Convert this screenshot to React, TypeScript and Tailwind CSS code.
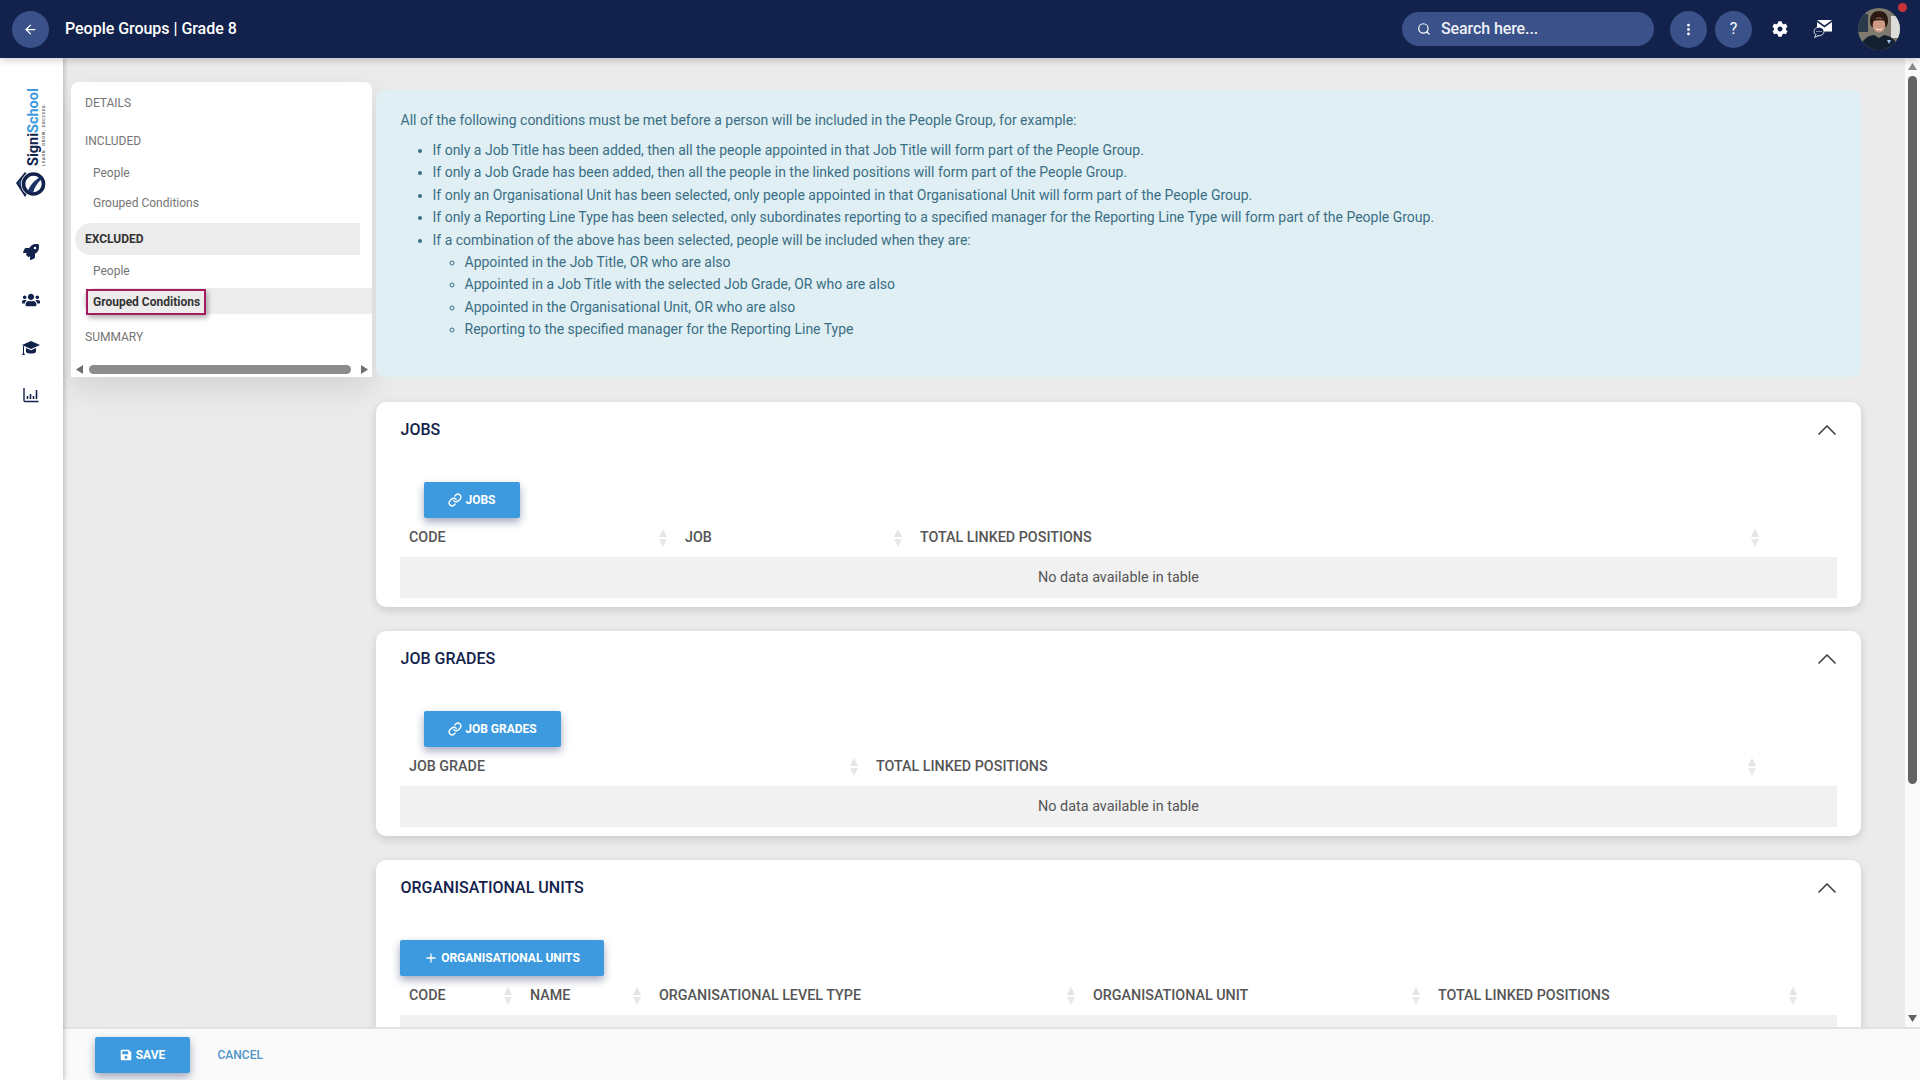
import { ArrowLeft, ChevronUp, EllipsisVertical, Link, Plus, Search } from 'lucide-react';
import { FaCog, FaRocket, FaSave, FaUsers } from 'react-icons/fa';

const SortIcon = () => (
  <svg width="8" height="18" viewBox="0 0 8 18" className="shrink-0">
    <path d="M4 0 8 8H0z" fill="#e4e4e4" />
    <path d="M0 10h8l-4 8z" fill="#e8e8e8" />
  </svg>
);

const Logo = () => (
  <div className="flex flex-col items-center pt-[31px]">
    <div className="ml-[9px] rotate-180 [writing-mode:vertical-rl] whitespace-nowrap h-[77px]">
      <div className="text-[14.5px] leading-[15px] font-bold">
        <span className="text-[#12224c]">Signi</span>
        <span className="text-[#3d9ade]">School</span>
      </div>
      <div className="text-[4px] leading-[5px] tracking-[0.8px] font-bold text-[#555]">LEARN. GROW. SUCCEED.</div>
    </div>
    <svg width="30" height="28" viewBox="0 0 30 28" className="mt-[4px] mr-[2px]">
      <path d="M0 13 9 2l3 3v17l-3 5z" fill="#12224c" />
      <path d="M2 13 9 6v15z" fill="#2c4a78" />
      <circle cx="17.500" cy="14" r="12.500" fill="#fff" />
      <circle cx="17.500" cy="14" r="10" fill="#fff" stroke="#12224c" strokeWidth="3.600" />
      <path d="M12 21c2-6 6-10 12-14l1.500 2c-4 4-7 8-8.500 14z" fill="#1b3566" />
    </svg>
  </div>
);

const Sidebar = () => (
  <aside className="relative z-10 w-[63px] shrink-0 bg-white shadow-[2px_0_4px_rgba(0,0,0,0.18)]">
    <Logo />
    <div className="mt-[46px] pr-[2px] flex flex-col items-center gap-[32px] text-[#12224c]">
      <div className="h-[16px] flex items-center"><FaRocket size={16} /></div>
      <div className="h-[16px] flex items-center"><FaUsers size={18} /></div>
      <div className="h-[16px] flex items-center">
        <svg width="18" height="14" viewBox="0 0 18 14" fill="#12224c">
          <path d="M9 0 18 4 9 8 0 4z" />
          <path d="M4 7 9 9.300 14 7v4c-1.500 2-8.500 2-10 0z" />
          <path d="M1 5h1v7l1 2H0l1-2z" />
        </svg>
      </div>
      <div className="h-[16px] -mt-[1px] flex items-center">
        <svg width="16" height="16" viewBox="0 0 16 16" fill="none" stroke="#12224c">
          <path d="M1 1v12.500q0 1 1 1h13.500" strokeWidth="1.400" />
          <path d="M4.500 9v3M7.500 7v5M10.500 9v3M13.500 3v9" strokeWidth="1.600" />
        </svg>
      </div>
    </div>
  </aside>
);

const Avatar = () => (
  <div className="relative">
    <svg width="42" height="42" viewBox="0 0 42 42" className="rounded-full">
      <rect width="42" height="42" fill="#7f7a6e" />
      <rect x="0" y="6" width="10" height="18" fill="#2b3b4c" />
      <rect x="33" y="8" width="9" height="22" fill="#dcdcd8" />
      <path d="M12 13c0-7 4-10 9-10s9 3 9 10c0 3-1 5-2 6H14c-1-1-2-3-2-6z" fill="#2a1a12" />
      <ellipse cx="21" cy="17" rx="6.300" ry="7.500" fill="#d09a84" />
      <path d="M14.500 13c2-3 9-4 13 0-3-1-9-1-13 0z" fill="#2a1a12" />
      <path d="M17.500 20q3.500 2.500 7 0l-1 2h-5z" fill="#f4ece8" />
      <path d="M2 42c1-10 7-14 14-15l5 3 5-3c7 1 13 5 14 15z" fill="#14202f" />
      <path d="M29 32h4l-2 4z" fill="#9fc9e8" />
    </svg>
    <span className="absolute top-[-5px] right-[-7px] w-[9px] h-[9px] rounded-full bg-[#c8333a]" />
  </div>
);

const Header = () => (
  <header className="relative z-20 h-[58px] shrink-0 bg-[#12224c] flex items-center justify-between shadow-[0_2px_8px_rgba(0,0,0,0.2)] pl-[12px] pr-[20px]">
    <div className="flex items-center gap-[16px]">
      <button className="w-[37px] h-[37px] rounded-full bg-[#3a5289] flex items-center justify-center text-white">
        <ArrowLeft size={15} />
      </button>
      <span className="text-white text-[16px] font-medium tracking-[-0.03px]">People Groups | Grade 8</span>
    </div>
    <div className="flex items-center">
      <div className="w-[252px] h-[34px] rounded-full bg-[#3a5289] flex items-center pl-[15px] gap-[10px] text-white">
        <Search size={14} />
        <span className="text-[16px] font-medium tracking-[-0.1px] text-[#eef1f7]">Search here...</span>
      </div>
      <button className="ml-[16px] w-[37px] h-[37px] rounded-full bg-[#3a5289] flex items-center justify-center text-white">
        <EllipsisVertical size={15} strokeWidth={2.500} />
      </button>
      <button className="ml-[8px] w-[37px] h-[37px] rounded-full bg-[#3a5289] flex items-center justify-center text-white text-[16px]">
        ?
      </button>
      <FaCog size={16} className="ml-[20px] text-white" />
      <svg width="20" height="18" viewBox="0 0 20 18" className="ml-[25px]">
        <path d="M4 0h15l-7.500 5.500z" fill="#fff" />
        <path d="M4 2l7.500 5.500L19 2v9.500H4z" fill="#fff" />
        <ellipse cx="6" cy="11.500" rx="5" ry="4.300" fill="#12224c" stroke="#fff" strokeWidth="0.800" />
        <path d="M2.800 15 1.500 17.500 5.500 15.800" fill="#12224c" stroke="#fff" strokeWidth="0.800" />
        <path d="M3.500 11.500h1M5.500 11.500h1M7.500 11.500h1" stroke="#fff" strokeWidth="0.900" />
      </svg>
      <div className="ml-[25px]">
        <Avatar />
      </div>
    </div>
  </header>
);

const SideNav = () => (
  <nav className="w-[301px] shrink-0 self-start bg-white rounded-t-[8px] text-[12px] text-[#757575] shadow-[0_12px_30px_rgba(0,0,0,0.1)]">
    <div className="h-[42px] flex items-center pl-[14px]">DETAILS</div>
    <div className="h-[34px] flex items-center pl-[14px]">INCLUDED</div>
    <div className="h-[30px] flex items-center pl-[22px]">People</div>
    <div className="h-[30px] flex items-center pl-[22px]">Grouped Conditions</div>
    <div className="mt-[5px] ml-[4px] w-[285px] h-[32px] flex items-center pl-[10px] bg-[#ececec] rounded-l-full rounded-r-[3px] font-bold text-[#333]">
      EXCLUDED
    </div>
    <div className="h-[31px] flex items-center pl-[22px]">People</div>
    <div className="mt-[2px] ml-[12px] h-[26px] bg-[#ececec] rounded-l-full flex items-center">
      <span className="ml-[3px] h-[26px] pl-[5px] pr-[4px] flex items-center translate-y-[1px] border-2 border-[#a61b5f] font-bold text-[#333] bg-[#ececec] shadow-[2px_3px_5px_rgba(0,0,0,0.3)]">
        Grouped Conditions
      </span>
    </div>
    <div className="h-[46px] flex items-center pl-[14px]">SUMMARY</div>
    <div className="h-[17px] flex items-center pl-[5px] pr-[4px] pt-[2px] gap-[5px] bg-white">
      <svg width="8" height="9" viewBox="0 0 8 9"><path d="M7 0v9L0 4.500z" fill="#707070" /></svg>
      <div className="flex-1 h-[9px] rounded-full bg-[#8c8c8c]" />
      <svg width="8" height="9" viewBox="0 0 8 9" className="ml-[4px]"><path d="M1 0v9l7-4.500z" fill="#707070" /></svg>
    </div>
  </nav>
);

const InfoBox = () => (
  <section className="mb-[1px] bg-[#e0eff4] rounded-[8px] pt-[18.6px] pb-[36.4px] pl-[24.5px] pr-[24px] text-[14px] leading-[22.4px] text-[#3a6e84] shadow-[0_0_6px_rgba(0,0,0,0.02)]">
    <p className="mb-[8px]">All of the following conditions must be met before a person will be included in the People Group, for example:</p>
    <ul className="list-disc pl-[32px]">
      <li>If only a Job Title has been added, then all the people appointed in that Job Title will form part of the People Group.</li>
      <li>If only a Job Grade has been added, then all the people in the linked positions will form part of the People Group.</li>
      <li>If only an Organisational Unit has been selected, only people appointed in that Organisational Unit will form part of the People Group.</li>
      <li>If only a Reporting Line Type has been selected, only subordinates reporting to a specified manager for the Reporting Line Type will form part of the People Group.</li>
      <li>
        If a combination of the above has been selected, people will be included when they are:
        <ul className="list-[circle] pl-[32px]">
          <li>Appointed in the Job Title, OR who are also</li>
          <li>Appointed in a Job Title with the selected Job Grade, OR who are also</li>
          <li>Appointed in the Organisational Unit, OR who are also</li>
          <li>Reporting to the specified manager for the Reporting Line Type</li>
        </ul>
      </li>
    </ul>
  </section>
);

type Column = { label: string; width: string };

const ActionButton = ({ label, plus, className }: { label: string; plus?: boolean; className: string }) => (
  <button className={`h-[36px] rounded-[2px] bg-[#3d9ade] text-white text-[12px] font-bold flex items-center justify-center gap-[3px] shadow-[0_4px_8px_rgba(20,40,90,0.4)] ${className}`}>
    {plus ? <Plus size={14} strokeWidth={2.200} /> : <Link size={14} strokeWidth={2.400} />}
    {label}
  </button>
);

const Card = ({ title, button, columns, emptyText }: { title: string; button: React.ReactNode; columns: Column[]; emptyText?: string }) => (
  <section className="bg-white rounded-[10px] shadow-[0_3px_10px_rgba(0,0,0,0.14)] px-[24px] pb-[9px] shrink-0">
    <div className="h-[55px] flex items-center justify-between">
      <h2 className="ml-[0.5px] text-[16px] font-medium text-[#12224c]">{title}</h2>
      <ChevronUp size={32} strokeWidth={1.300} className="text-[#444] mr-[-6px]" />
    </div>
    <div className="pt-[25px]">{button}</div>
    <table className="w-full table-fixed border-collapse">
      <thead>
        <tr>
          {columns.map((c) => (
            <th key={c.label} className={`h-[39px] pl-[9px] pr-[9px] text-left ${c.width}`}>
              <div className="flex items-center justify-between text-[14.3px] font-medium text-[#555]">
                {c.label}
                <SortIcon />
              </div>
            </th>
          ))}
          <th />
        </tr>
      </thead>
      <tbody>
        <tr>
          <td colSpan={columns.length + 1} className="h-[41px] bg-[#f1f1f1] text-center text-[14.4px] text-[#555]">
            {emptyText}
          </td>
        </tr>
      </tbody>
    </table>
  </section>
);

const PageScrollbar = () => (
  <div className="w-[15px] shrink-0 bg-[#fafafa] flex flex-col items-center pt-[5px] pb-[5px]">
    <svg width="9" height="7" viewBox="0 0 9 7"><path d="M4.500 0 9 7H0z" fill="#8a8a8a" /></svg>
    <div className="mt-[6px] w-[9px] h-[708px] rounded-full bg-[#636363]" />
    <div className="flex-1" />
    <svg width="9" height="7" viewBox="0 0 9 7"><path d="M0 0h9L4.500 7z" fill="#636363" /></svg>
  </div>
);

const Footer = () => (
  <footer className="h-[53px] shrink-0 bg-[#fafafa] border-t-[2px] border-[#e2e2e2] flex items-center pl-[32px]">
    <button className="w-[95px] h-[36px] rounded-[2px] bg-[#3d9ade] text-white text-[12px] font-bold flex items-center justify-center gap-[4px] shadow-[0_4px_8px_rgba(20,40,90,0.4)]">
      <FaSave size={12} />
      SAVE
    </button>
    <span className="ml-[27.5px] text-[12px] font-medium text-[#4f93c9]">CANCEL</span>
  </footer>
);

export default function App() {
  return (
    <div className="h-screen overflow-hidden flex flex-col bg-[#ebebeb] font-['Roboto',sans-serif]">
      <Header />
      <div className="flex flex-1 min-h-0">
        <Sidebar />
        <div className="flex-1 min-w-0 flex flex-col">
          <div className="flex flex-1 min-h-0">
            <main className="flex-1 min-w-0 overflow-hidden flex gap-[4px] pt-[24px] pl-[8px] pr-[44px]">
              <SideNav />
              <div className="flex-1 min-w-0 flex flex-col gap-[24px] pt-[8px]">
                <InfoBox />
                <Card
                  title="JOBS"
                  emptyText="No data available in table"
                  button={<ActionButton label="JOBS" className="ml-[24px] w-[96px]" />}
                  columns={[
                    { label: 'CODE', width: 'w-[276px]' },
                    { label: 'JOB', width: 'w-[235px]' },
                    { label: 'TOTAL LINKED POSITIONS', width: 'w-[857px]' },
                  ]}
                />
                <Card
                  title="JOB GRADES"
                  emptyText="No data available in table"
                  button={<ActionButton label="JOB GRADES" className="ml-[24px] w-[137px]" />}
                  columns={[
                    { label: 'JOB GRADE', width: 'w-[467px]' },
                    { label: 'TOTAL LINKED POSITIONS', width: 'w-[898px]' },
                  ]}
                />
                <Card
                  title="ORGANISATIONAL UNITS"
                  button={<ActionButton label="ORGANISATIONAL UNITS" plus className="w-[204px]" />}
                  columns={[
                    { label: 'CODE', width: 'w-[121px]' },
                    { label: 'NAME', width: 'w-[129px]' },
                    { label: 'ORGANISATIONAL LEVEL TYPE', width: 'w-[434px]' },
                    { label: 'ORGANISATIONAL UNIT', width: 'w-[345px]' },
                    { label: 'TOTAL LINKED POSITIONS', width: 'w-[377px]' },
                  ]}
                />
              </div>
            </main>
            <PageScrollbar />
          </div>
          <Footer />
        </div>
      </div>
    </div>
  );
}
